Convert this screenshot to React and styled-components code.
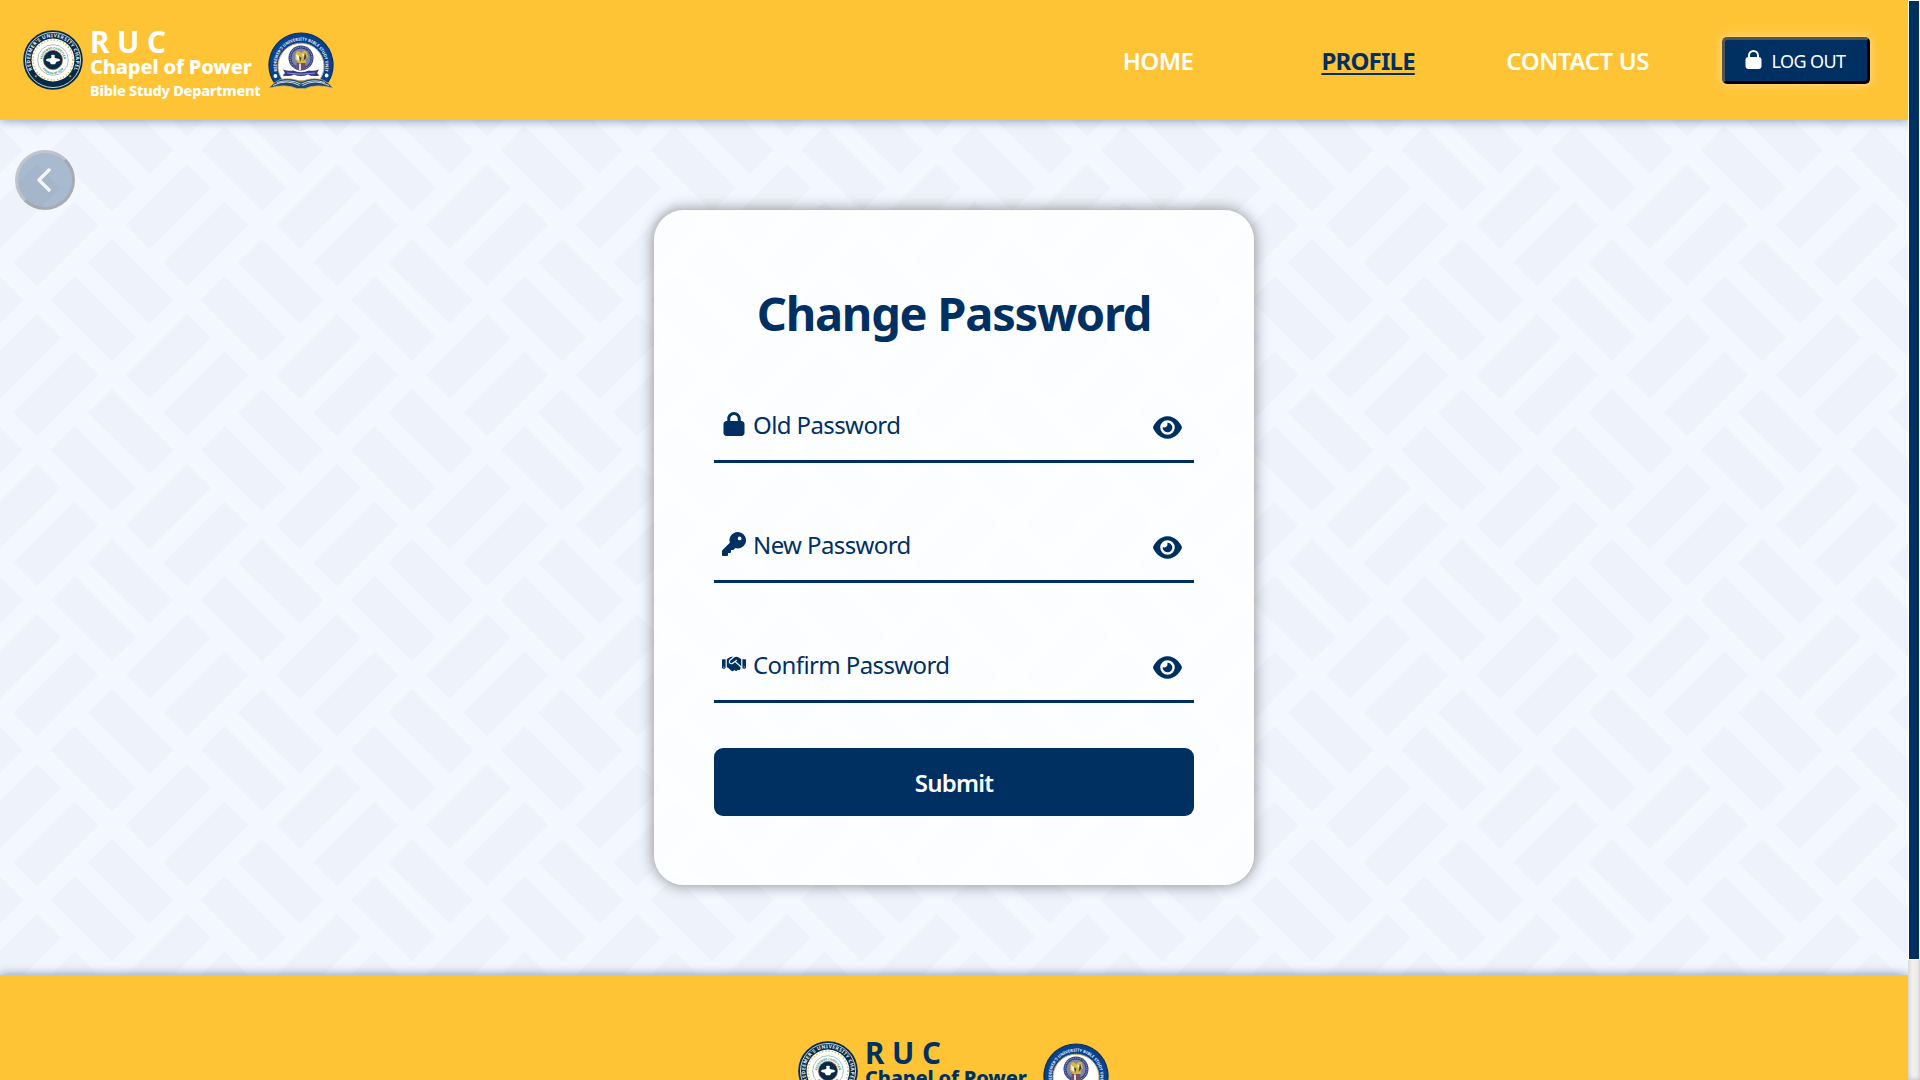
import React from "react";
import styled, { createGlobalStyle } from "styled-components";
import { FaLock, FaKey, FaHandshake, FaEye } from "react-icons/fa6";

const NAVY = "#003062";
const YELLOW = "#ffc436";

const brick = (points) => `<polygon points='${points}'/>`;
const tile = [
  "13.3,112.7 74.6,51.4 98.3,75 37,136.3",
  "-24,75 37,14 61,37.7 -0.4,99",
  "126,75 187,14 211,37.7 149.6,99",
  "88,112.7 112,88.9 173.3,150 149.6,173.8",
  "-62,-37.3 -38,-61.1 23.3,0 -0.4,23.8",
  "88,-37.3 112,-61.1 173.3,0 149.6,23.8",
  "-62,112.7 -38,88.9 23.3,150 -0.4,173.8",
  "50.7,0 74.6,-23.9 136,37.5 112,61.3",
  "50.7,150 74.6,126.1 136,187.5 112,211.3",
].map(brick).join("");
const patternUrl = `data:image/svg+xml,${encodeURIComponent(
  `<svg xmlns='http://www.w3.org/2000/svg' width='150' height='150' fill='#eef2fa'>${tile}</svg>`
)}`;

const GlobalStyle = createGlobalStyle`
  *, *::before, *::after { box-sizing: border-box; }
  body { margin: 0; overflow: hidden; font-family: "Noto Sans", "Open Sans", sans-serif; }
`;

const Viewport = styled.div`
  display: flex;
  height: 1080px;
  overflow: hidden;
`;

const Page = styled.div`
  flex: 1;
  display: flex;
  flex-direction: column;
  overflow: hidden;
  background: #f3f7ff url("${patternUrl}");
`;

const Header = styled.header`
  flex: none;
  display: flex;
  align-items: center;
  height: 120px;
  padding: 0 38.5px 0 23px;
  background: ${YELLOW};
  box-shadow: 0 0 10px rgba(0, 48, 98, 0.5);
`;

const Brand = styled.div`
  display: flex;
  align-items: flex-start;
  margin-top: 8px;
  color: ${(p) => p.$color};
`;

const BrandText = styled.div`
  display: flex;
  flex-direction: column;
  width: 177px;
  margin: 0 1px 0 7px;
  white-space: nowrap;
`;

const BrandLine = styled.span`
  font-size: ${(p) => p.$size}px;
  line-height: ${(p) => p.$line}px;
  letter-spacing: ${(p) => p.$track}px;
  font-weight: ${(p) => p.$weight || 800};
`;

const SealBox = styled.div`
  display: flex;
  margin-top: ${(p) => p.$top}px;
`;

const Nav = styled.nav`
  display: flex;
  align-items: center;
  margin-left: auto;
`;

const NavLink = styled.a`
  margin: 2px ${(p) => p.$gap}px 0 0;
  color: ${(p) => (p.$active ? NAVY : "#fff")};
  font-size: 24px;
  font-weight: ${(p) => (p.$active ? 700 : 600)};
  line-height: 32px;
  letter-spacing: ${(p) => p.$track}px;
  text-decoration: ${(p) => (p.$active ? "underline" : "none")};
  text-decoration-thickness: 2px;
  text-underline-offset: 3px;
  white-space: nowrap;
`;

const LogoutButton = styled.button`
  display: flex;
  align-items: center;
  gap: 10px;
  width: 148px;
  height: 47px;
  padding: 1px 0 0 20px;
  border: 3px outset #000;
  border-radius: 5px;
  background: ${NAVY};
  color: #fff;
  font-family: inherit;
  font-size: 18px;
  letter-spacing: -0.6px;
  white-space: nowrap;
  box-shadow: 0 0 10px rgba(255, 255, 255, 0.5);
`;

const LockMark = styled.svg`
  flex: none;
  margin-bottom: 3px;
`;

const Main = styled.main`
  flex: none;
  display: flex;
  flex-direction: column;
  height: 855px;
`;

const BackButton = styled.button`
  display: flex;
  align-items: center;
  justify-content: center;
  width: 60px;
  height: 60px;
  margin: 30px 0 0 15px;
  padding: 0 3px 0 0;
  border: 3px outset #000;
  border-radius: 50%;
  background: ${NAVY};
  color: #fff;
  opacity: 0.3;
`;

const Card = styled.form`
  display: flex;
  flex-direction: column;
  align-self: center;
  width: 600px;
  height: 675px;
  padding: 71px 60px 0;
  border-radius: 30px;
  background: rgba(255, 255, 255, 0.8);
  box-shadow: 0 0 15px rgba(0, 0, 0, 0.45);
`;

const Title = styled.h1`
  margin: 0 0 36px;
  color: ${NAVY};
  font-size: 47px;
  font-weight: 700;
  line-height: 64px;
  letter-spacing: -1.25px;
  text-align: center;
  white-space: nowrap;
`;

const Field = styled.label`
  display: flex;
  align-items: center;
  height: 82px;
  margin-bottom: 38px;
  padding: 10px 12px 0 8px;
  border-bottom: 3px solid ${NAVY};
  color: ${NAVY};
  font-size: 24px;
`;

const FieldIcon = styled.span`
  display: flex;
  margin: 0 7px 4px 0;
`;

const FieldText = styled.span`
  flex: 1;
  margin-bottom: 2px;
  letter-spacing: -0.6px;
  line-height: 32px;
`;

const EyeIcon = styled.span`
  display: flex;
  margin-top: 3px;
  font-size: 29px;
`;

const Submit = styled.button`
  height: 68px;
  margin-top: 7px;
  padding: 0;
  border: 0;
  border-radius: 9px;
  background: ${NAVY};
  color: #fff;
  font-family: inherit;
  font-size: 24px;
  font-weight: 600;
  letter-spacing: -0.75px;
`;

const Footer = styled.footer`
  flex: none;
  display: flex;
  justify-content: center;
  align-items: flex-start;
  height: 200px;
  padding-top: 58px;
  background: ${YELLOW};
  box-shadow: 0 0 10px rgba(0, 48, 98, 0.5);
`;

const ScrollTrack = styled.div`
  width: 12px;
  padding: 1px;
  background: #f1f0ef;
  box-shadow: inset 0 0 5px #bbb;
`;

const ScrollThumb = styled.div`
  height: 958px;
  background: ${NAVY};
  box-shadow: 0 0 0 1px #fff;
`;

function ChapelSeal({ id }) {
  return (
    <svg width="60" height="60" viewBox="0 0 61 61">
      <defs>
        <path id={`${id}-rim`} d="M14 46.800A23.200 23.200 0 1 1 47 46.800" />
        <path id={`${id}-in`} d="M19.500 30.500A11 11 0 1 1 41.500 30.500" />
        <path id={`${id}-low`} d="M17.500 32A13 13 0 0 0 43.500 32" />
      </defs>
      <circle cx="30.5" cy="30.5" r="30.3" fill="#082b45" />
      <circle cx="30.5" cy="30.5" r="28" fill="none" stroke="#dfe8ed" strokeWidth="0.9" />
      <circle cx="30.5" cy="30.5" r="21.8" fill="#fff" />
      <circle cx="30.5" cy="30.5" r="20.3" fill="none" stroke="#d9b44b" strokeWidth="1.5" strokeDasharray="1.2 2.1" />
      <circle cx="30.5" cy="30.5" r="15.6" fill="#fff" stroke="#9aa9b8" strokeWidth="0.8" />
      <circle cx="30.5" cy="30.5" r="9.8" fill="#082b45" stroke="#b85b61" strokeWidth="0.7" />
      <path d="M23 30.500Q24 28.800 28 28.600L29 27.800 28.600 25.500Q30.500 24.600 32.400 25.500L32 27.800 33 28.600Q37 28.800 38 30.500 37 32 34 32.200L32.500 34.800H28.500L27 32.200Q24 32 23 30.500Z" fill="#fff" />
      <text fill="#e8eef2" fontFamily="Noto Sans" fontWeight="700" fontSize="5" letterSpacing="0.4">
        <textPath href={`#${id}-rim`} startOffset="50%" textAnchor="middle">REDEEMER'S UNIVERSITY CHAPEL</textPath>
      </text>
      <text fill="#22945a" fontFamily="Noto Sans" fontWeight="700" fontSize="3">
        <textPath href={`#${id}-in`} startOffset="50%" textAnchor="middle">REDEEMED CHRISTIAN</textPath>
      </text>
      <text fill="#22945a" fontFamily="Noto Sans" fontWeight="700" fontSize="3">
        <textPath href={`#${id}-low`} startOffset="50%" textAnchor="middle">CHURCH OF GOD</textPath>
      </text>
      <circle cx="13" cy="47" r="1" fill="#d9a928" />
      <circle cx="48" cy="47" r="1" fill="#d9a928" />
    </svg>
  );
}

function BibleSeal({ id }) {
  return (
    <svg width="67" height="58" viewBox="0 0 67 58">
      <defs>
        <path id={`${id}-rim`} d="M9.800 41A24.500 24.500 0 1 1 56.200 41" />
      </defs>
      <path d="M5.900 50A32 32 0 1 1 60.100 50Z" fill="#08418f" stroke="#102c50" strokeWidth="1.2" />
      <path d="M15 48.500A23 23 0 1 1 51 48.500Z" fill="#fff" stroke="#c9b066" strokeWidth="1" />
      <path d="M1 56Q6 50 12 47.500Q24 45 33 50Q42 45 54 47.500Q60 50 65 56Q48 51.500 37 56.500H29Q18 51.500 1 56Z" fill="#21466f" stroke="#c4ad6a" strokeWidth="0.700" />
      <path d="M5 53.500Q19 46.500 31.500 53.500M9 50.500Q22 46.500 32.500 52M61 53.500Q47 46.500 34.500 53.500M57 50.500Q44 46.500 33.500 52" fill="none" stroke="#dce6ed" strokeWidth="0.9" />
      <text fill="#e8eef7" fontFamily="Noto Sans" fontWeight="700" fontSize="4.1">
        <textPath href={`#${id}-rim`} startOffset="50%" textAnchor="middle">REDEEMER'S UNIVERSITY BIBLE STUDY UNIT</textPath>
      </text>
      <circle cx="33" cy="26" r="12.500" fill="#34407a" />
      <circle cx="33" cy="26" r="9.600" fill="#7d86ad" />
      <circle cx="33" cy="26" r="11" fill="none" stroke="#9aa2c6" strokeWidth="1.1" strokeDasharray="0.9 0.9" />
      <path d="M27.500 21.500Q29 18 31.500 19.500L33 21 35 19.500Q38 17.500 39 20.500L40 25 37.500 27.500 38 31 33.500 33 30 30.500 27 27Z" fill="#d8b840" />
      <path d="M28 22L32 24.500 31.500 29 28.500 27ZM34 21.500L36.500 22.500 35 25Z" fill="#f6f0cf" />
      <path d="M37 20.500L38.500 25.500 35.500 29ZM31 24L33.500 26 32 30Z" fill="#3c3b55" />
      <path d="M28.500 31H37.500L37 38H29Z" fill="#6f5068" />
      <path d="M31 31.500H33V38H31Z" fill="#e4d6de" />
      <path d="M15 37.500Q20 39.500 25 38.500 33 42 41 38.500 46 39.500 51 37.500L49 41 51.500 43.500Q44 45 40 42.500 33 45.500 26 42.500 22 45 14.500 43.500L17 41Z" fill="#35388a" />
      <path d="M19 41Q33 43.500 47 41" fill="none" stroke="#a9a9da" strokeWidth="0.8" />
      <circle cx="7.400" cy="44" r="1.900" fill="#fff" />
      <circle cx="58.600" cy="43.500" r="1.900" fill="#fff" />
    </svg>
  );
}

function BrandBlock({ id, color }) {
  return (
    <Brand $color={color}>
      <SealBox $top={0}>
        <ChapelSeal id={`${id}-chapel`} />
      </SealBox>
      <BrandText>
        <BrandLine $size={29.5} $line={23} $track={0} $weight={700}>R U C</BrandLine>
        <BrandLine $size={20} $line={28} $track={-0.15}>Chapel of Power</BrandLine>
        <BrandLine $size={14.5} $line={18} $track={-0.25}>Bible Study Department</BrandLine>
      </BrandText>
      <SealBox $top={2}>
        <BibleSeal id={`${id}-bible`} />
      </SealBox>
    </Brand>
  );
}

const fields = [
  { label: "Old Password", Icon: FaLock },
  { label: "New Password", Icon: FaKey },
  { label: "Confirm Password", Icon: FaHandshake },
];

export default function App() {
  return (
    <>
      <GlobalStyle />
      <Viewport>
        <Page>
          <Header>
            <BrandBlock id="head" color="#fff" />
            <Nav>
              <NavLink $gap={128} $track={-0.5}>HOME</NavLink>
              <NavLink $active $gap={91.5} $track={-0.8}>PROFILE</NavLink>
              <NavLink $gap={72.5} $track={-0.4}>CONTACT US</NavLink>
              <LogoutButton type="button">
                <LockMark width="17" height="19" viewBox="0 0 17 19">
                  <path d="M4 9V5.500a4.500 4.500 0 0 1 9 0V9" fill="none" stroke="currentColor" strokeWidth="2" />
                  <rect x="0.5" y="7" width="16" height="12" rx="3" fill="currentColor" />
                </LockMark>
                LOG OUT
              </LogoutButton>
            </Nav>
          </Header>
          <Main>
            <BackButton type="button" aria-label="Back">
              <svg width="14" height="24" viewBox="0 0 14 24" fill="none" stroke="currentColor" strokeWidth="3.4" strokeLinecap="round" strokeLinejoin="round">
                <path d="M12 2L2 12l10 10" />
              </svg>
            </BackButton>
            <Card>
              <Title>Change Password</Title>
              {fields.map(({ label, Icon }) => (
                <Field key={label}>
                  <FieldIcon><Icon size={24} /></FieldIcon>
                  <FieldText>{label}</FieldText>
                  <EyeIcon><FaEye /></EyeIcon>
                </Field>
              ))}
              <Submit type="button">Submit</Submit>
            </Card>
          </Main>
          <Footer>
            <BrandBlock id="foot" color={NAVY} />
          </Footer>
        </Page>
        <ScrollTrack>
          <ScrollThumb />
        </ScrollTrack>
      </Viewport>
    </>
  );
}
